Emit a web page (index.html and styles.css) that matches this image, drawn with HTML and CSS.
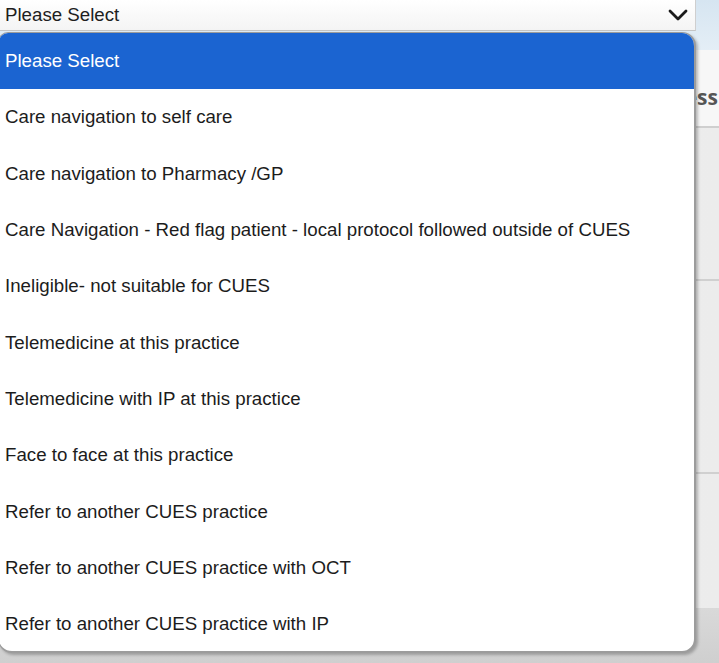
FILE: index.html
```html
<!DOCTYPE html>
<html>
<head>
<meta charset="utf-8">
<link rel="stylesheet" href="styles.css">
</head>
<body>
<div class="page">
  <div class="topbar">
    <div class="select">
      <span class="select-text">Please Select</span>
      <svg class="chev" width="20" height="12" viewBox="0 0 20 12"><path d="M2 2 L10 10 L18 2" fill="none" stroke="#1a1a1a" stroke-width="2.8" stroke-linecap="round" stroke-linejoin="round"/></svg>
    </div>
  </div>
  <div class="panel">
    <div class="panel-head"><span class="panel-title">Access</span></div>
    <div class="section s1"></div>
    <div class="section s2"></div>
    <div class="section s3"></div>
  </div>
  <div class="footer"></div>

  <ul class="dropdown">
    <li class="opt selected">Please Select</li>
    <li class="opt">Care navigation to self care</li>
    <li class="opt">Care navigation to Pharmacy /GP</li>
    <li class="opt">Care Navigation - Red flag patient - local protocol followed outside of CUES</li>
    <li class="opt">Ineligible- not suitable for CUES</li>
    <li class="opt">Telemedicine at this practice</li>
    <li class="opt">Telemedicine with IP at this practice</li>
    <li class="opt">Face to face at this practice</li>
    <li class="opt">Refer to another CUES practice</li>
    <li class="opt">Refer to another CUES practice with OCT</li>
    <li class="opt">Refer to another CUES practice with IP</li>
  </ul>
</div>
</body>
</html>
```
FILE: styles.css
```css
* { box-sizing: border-box; }
html, body { margin: 0; padding: 0; }
body {
  font-family: "Liberation Sans", Arial, sans-serif;
  background: #d3d3d3;
  width: 719px;
  height: 663px;
  overflow: hidden;
}
.page {
  position: relative;
  width: 719px;
  height: 663px;
  display: flex;
  flex-direction: column;
}
.topbar {
  height: 50px;
  background: linear-gradient(#d6e5f1, #e4eef6);
  flex: none;
}
.select {
  width: 696px;
  height: 31px;
  background: linear-gradient(#ffffff, #f4f4f4);
  border-right: 1px solid #cfcfcf;
  border-bottom: 1px solid #c4c4c4;
  display: flex;
  align-items: center;
  justify-content: space-between;
  padding: 0 7px 0 5px;
}
.select-text {
  font-size: 18.7px;
  color: #1e1e1e;
  line-height: 1;
}
.chev { display: block; }
.panel {
  flex: none;
  display: flex;
  flex-direction: column;
}
.panel-head {
  height: 78px;
  background: #f7f7f7;
  border-bottom: 2px solid #cfcfcf;
  padding: 37px 1px 0 0;
  text-align: right;
}
.panel-title {
  font-family: "Open Sans", "Liberation Sans", sans-serif;
  font-weight: 700;
  font-size: 21px;
  color: #555;
  line-height: 1;
}
.section {
  background: linear-gradient(90deg, #f1f1f1, #ececec);
  border-bottom: 2px solid #d0d0d0;
}
.s1 { height: 153px; }
.s2 { height: 193px; }
.s3 { height: 134px; border-bottom: none; }
.footer {
  flex: 1;
  background: linear-gradient(#d9d9d9, #cfcfcf);
}
.dropdown {
  position: absolute;
  left: -2px;
  top: 32px;
  width: 698px;
  height: 621px;
  margin: 0;
  padding: 0;
  list-style: none;
  background: #fff;
  border: 1px solid #9c9c9c;
  border-right-width: 2px;
  border-bottom-width: 2px;
  border-radius: 10px 14px 14px 14px;
  box-shadow: 2px 2px 3px rgba(0,0,0,0.25);
  overflow: hidden;
  display: flex;
  flex-direction: column;
}
.opt {
  height: 56.3px;
  flex: none;
  display: flex;
  align-items: center;
  padding-left: 6px;
  font-size: 18.7px;
  color: #1c1c1c;
  white-space: nowrap;
}
.opt.selected {
  background: #1b64d1;
  color: #fff;
}
```
